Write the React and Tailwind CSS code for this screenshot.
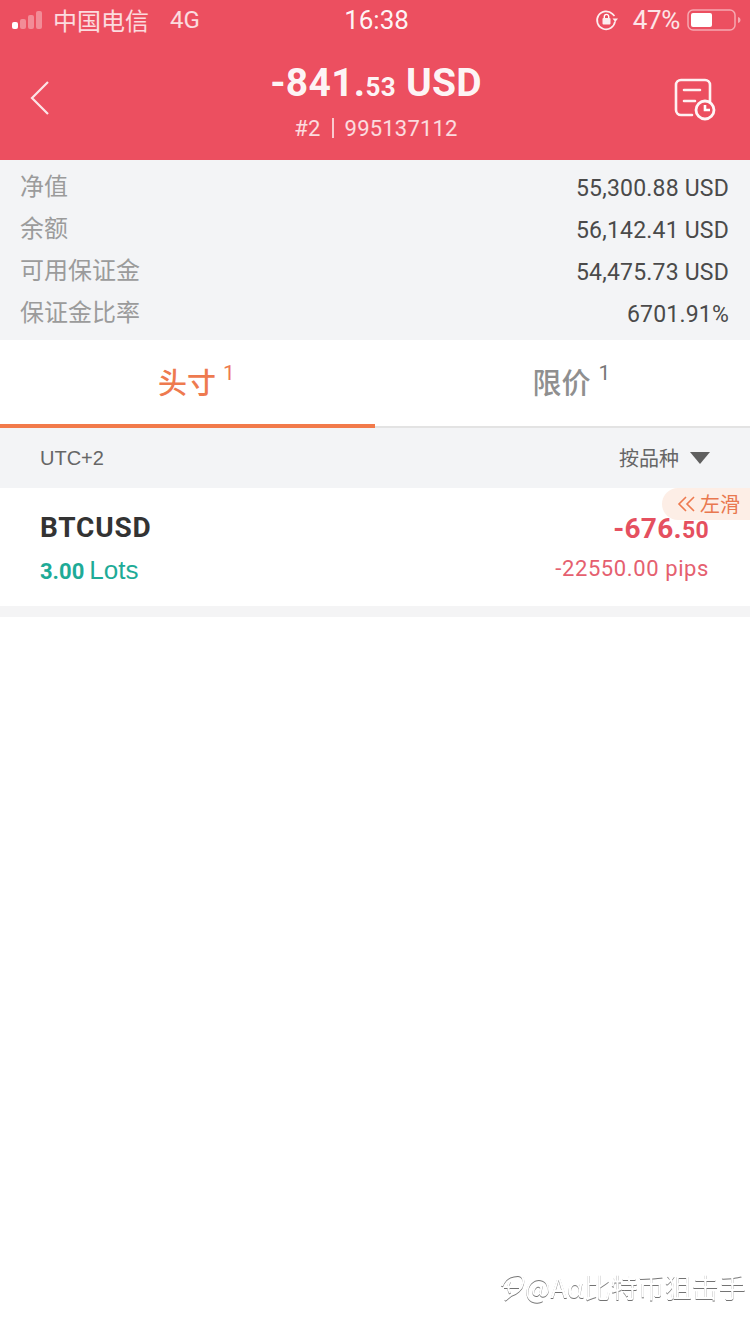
import React from "react";

const cjk = '"Noto Sans CJK SC", sans-serif';
const din = 'Roboto, "Noto Sans CJK SC", sans-serif';

const stats = [
  ["净值", "55,300.88 USD"],
  ["余额", "56,142.41 USD"],
  ["可用保证金", "54,475.73 USD"],
  ["保证金比率", "6701.91%"],
];

const SignalBars = () => (
  <svg width="36" height="22" viewBox="0 0 36 22" className="mr-[5px]">
    <rect x="0" y="13" width="6" height="7" rx="2" fill="#fff" />
    <rect x="8" y="10" width="6" height="10" rx="2" fill="#fff" fillOpacity="0.35" />
    <rect x="16" y="6" width="6" height="14" rx="2" fill="#fff" fillOpacity="0.35" />
    <rect x="24" y="2" width="6" height="18" rx="2" fill="#fff" fillOpacity="0.35" />
  </svg>
);

const RotationLock = () => (
  <svg width="24" height="24" viewBox="0 0 24 24" fill="none">
    <path d="M20 13.5a9 9 0 1 1-2.6-7.6L19.5 8" stroke="#fff" strokeWidth="1.7" strokeOpacity="0.9" />
    <path d="M23 10.5h-5.5l2.800 3.500z" fill="#fff" fillOpacity="0.9" />
    <rect x="7.5" y="10" width="8" height="6.5" rx="1" fill="#fff" fillOpacity="0.9" />
    <path d="M9.3 10V8.600a2.200 2.200 0 0 1 4.400 0V10" stroke="#fff" strokeWidth="1.4" />
  </svg>
);

const Battery = () => (
  <svg width="54" height="24" viewBox="0 0 54 24" fill="none">
    <rect x="1" y="2" width="47" height="20" rx="5" stroke="#fff" strokeOpacity="0.5" strokeWidth="1.5" />
    <rect x="4" y="5" width="21" height="14" rx="2" fill="#fff" />
    <path d="M51 9c1.600.4 2.500 1.500 2.500 3S52.600 14.600 51 15z" fill="#fff" fillOpacity="0.5" />
  </svg>
);

const BackIcon = () => (
  <svg width="20" height="36" viewBox="0 0 20 36" fill="none">
    <path d="M18 2 2 18l16 16" stroke="#fff" strokeOpacity="0.85" strokeWidth="2.2" />
  </svg>
);

const HistoryIcon = () => (
  <svg width="44" height="44" viewBox="0 0 44 44" fill="none">
    <path d="M20 38H9a5 5 0 0 1-5-5V8a5 5 0 0 1 5-5h24a5 5 0 0 1 5 5v17" stroke="#fff" strokeOpacity="0.92" strokeWidth="2.6" strokeLinecap="round" />
    <path d="M12 13h16M12 24h11" stroke="#fff" strokeOpacity="0.92" strokeWidth="2.6" strokeLinecap="round" />
    <circle cx="33" cy="33" r="9" stroke="#fff" strokeOpacity="0.95" strokeWidth="2.8" />
    <path d="M33 28v5h5" stroke="#fff" strokeWidth="2.6" />
  </svg>
);

const WeiboMark = () => (
  <svg width="26" height="30" viewBox="0 0 26 30" fill="none">
    <path d="M3 14C6 6 12 3 19 3c4 0 6 3 5 8-1 6-7 11-12 12L6 28" stroke="#fff" strokeWidth="2" />
    <path d="M5 15h15M11 9c-2 3-2 8 0 12" stroke="#fff" strokeWidth="2" />
  </svg>
);

export default function App() {
  return (
    <div className="relative min-h-[1334px] w-[750px] bg-white overflow-hidden" style={{ fontFamily: din }}>
      <div className="h-[160px] bg-[#ec4f60] text-white flex flex-col">
        <div className="h-[40px] flex items-center justify-between pl-[12px] pr-[9px]">
          <div className="flex items-center w-[220px]">
            <SignalBars />
            <span className="text-[24px] text-white/80" style={{ fontFamily: cjk }}>中国电信</span>
            <span className="ml-[21px] text-[24px] text-white/80">4G</span>
          </div>
          <span className="text-[26px] text-white/95">16:38</span>
          <div className="flex items-center justify-end w-[220px] gap-[14px]">
            <RotationLock />
            <div className="flex items-center gap-[7px]">
              <span className="text-[26px] tracking-[-0.3px] text-white/85">47%</span>
              <Battery />
            </div>
          </div>
        </div>
        <div className="flex-1 flex items-start justify-between pl-[30px] pr-[34px]">
          <div className="w-[50px] pt-[40px]"><BackIcon /></div>
          <div className="flex flex-col items-center pt-[18px]">
            <div className="h-[50px] leading-[50px] font-bold text-[39px] tracking-[0.3px] text-white/95 whitespace-nowrap">
              -841.<span className="text-[26px]">53</span> USD
            </div>
            <div className="h-[26px] mt-[7px] flex items-center text-[22px] tracking-[0.2px] text-white/80">
              <span>#2</span>
              <span className="mx-[11px] w-[2px] h-[20px] bg-white/70" />
              <span>995137112</span>
            </div>
          </div>
          <div className="w-[44px] pt-[37px]"><HistoryIcon /></div>
        </div>
      </div>

      <div className="h-[180px] bg-[#f3f4f6] pt-[7px] pl-[20px] pr-[21px]">
        {stats.map(([label, value]) => (
          <div key={label} className="h-[42px] flex items-center justify-between">
            <span className="text-[24px] text-[#9b9b9b] -mt-[6px]" style={{ fontFamily: cjk }}>{label}</span>
            <span className="text-[23px] text-[#4a4a4a] tracking-[0.2px] mt-[2px]">{value}</span>
          </div>
        ))}
      </div>

      <div className="h-[88px] flex bg-white">
        <div className="w-1/2 border-b-[4px] border-[#f27a4b] flex items-center justify-center pl-[18px]">
          <span className="text-[29px] font-medium text-[#ee7a4f]" style={{ fontFamily: cjk }}>头寸</span>
          <span className="text-[21px] text-[#ee7a4f] self-start mt-[18px] ml-[7px]">1</span>
        </div>
        <div className="w-1/2 border-b-[2px] border-[#e3e3e3] flex items-center justify-center pl-[18px] pb-[2px]">
          <span className="text-[29px] font-medium text-[#8f8f8f]" style={{ fontFamily: cjk }}>限价</span>
          <span className="text-[21px] text-[#777777] self-start mt-[18px] ml-[8px]">1</span>
        </div>
      </div>

      <div className="h-[60px] bg-[#f3f4f6] flex items-center justify-between pl-[40px] pr-[40px]">
        <span className="text-[20px] text-[#666666]" style={{ fontFamily: '"Liberation Sans", sans-serif' }}>UTC+2</span>
        <div className="flex items-center gap-[11px]">
          <span className="text-[20px] text-[#666666]" style={{ fontFamily: cjk }}>按品种</span>
          <svg width="20" height="12" viewBox="0 0 20 12"><path d="M0 0h20L10 12z" fill="#5f5f5f" /></svg>
        </div>
      </div>

      <div className="relative h-[118px] bg-white flex justify-between pl-[40px] pr-[41px]">
        <div className="pt-[22px]">
          <div className="h-[36px] leading-[36px] text-[28px] font-bold text-[#333333] tracking-[0.8px]">BTCUSD</div>
          <div className="mt-[5px] h-[30px] flex items-baseline gap-[5px]">
            <span className="text-[22px] font-bold text-[#1eab97]">3.00</span>
            <span className="text-[26px] text-[#1eab97]" style={{ fontFamily: '"Liberation Sans", sans-serif' }}>Lots</span>
          </div>
        </div>
        <div className="pt-[23px] flex flex-col items-end">
          <div className="h-[36px] leading-[36px] font-bold text-[28px] text-[#e5505f] tracking-[0.3px]">
            -676.<span className="text-[23px]">50</span>
          </div>
          <div className="mt-[7px] h-[30px] leading-[30px] text-[22px] text-[#e5606f] tracking-[0.6px]">-22550.00 pips</div>
        </div>
        <div className="absolute right-0 top-0 w-[88px] h-[32px] bg-[#fdeee6] rounded-l-[16px] flex items-center pl-[15px] gap-[4px]">
          <svg width="19" height="18" viewBox="0 0 19 18" fill="none">
            <path d="M9 2 2 9l7 7M17 2 10 9l7 7" stroke="#ee7a4f" strokeWidth="1.6" />
          </svg>
          <span className="text-[20px] text-[#e9784f]" style={{ fontFamily: cjk }}>左滑</span>
        </div>
      </div>

      <div className="h-[11px] bg-[#f4f4f5]" />

      <div className="absolute left-[499px] top-[1272px] flex items-center [filter:drop-shadow(0_1px_0.5px_rgba(0,0,0,0.55))]">
        <WeiboMark />
        <span className="text-[27px] text-white leading-[30px]" style={{ fontFamily: cjk }}>@Aα比特币狙击手</span>
      </div>
    </div>
  );
}
